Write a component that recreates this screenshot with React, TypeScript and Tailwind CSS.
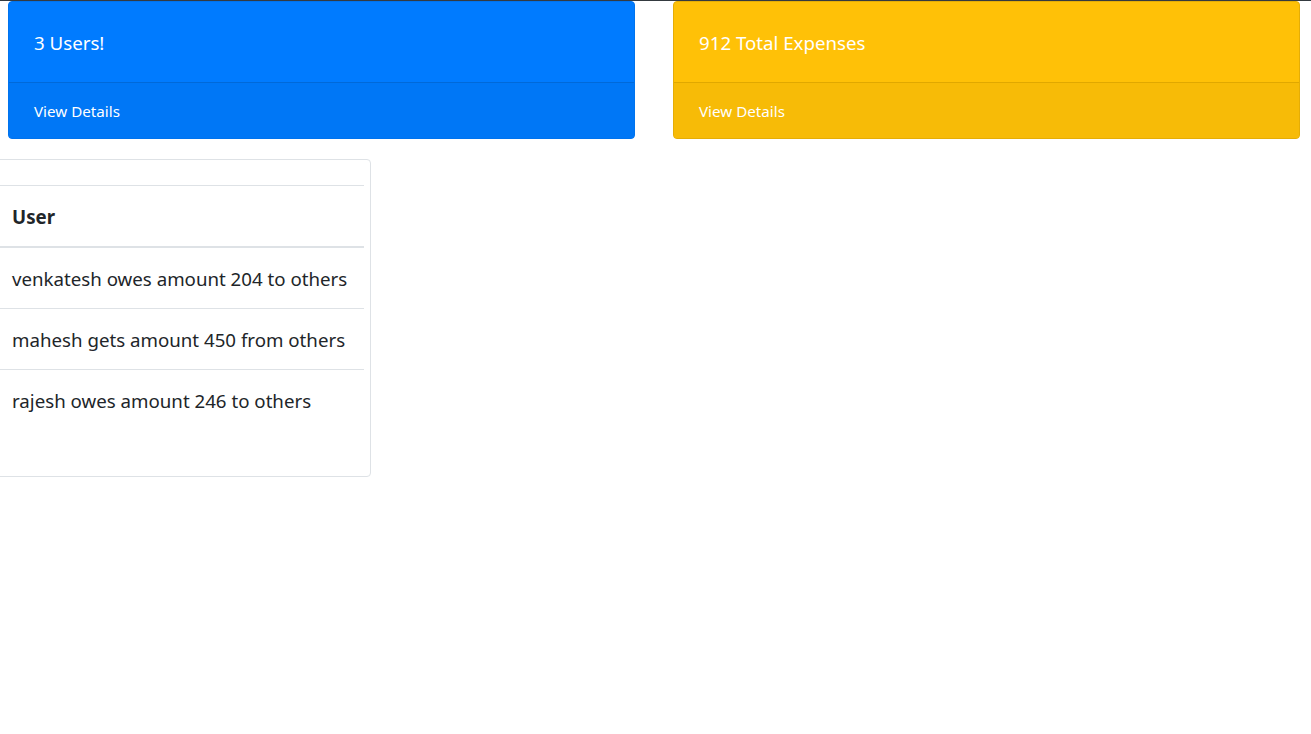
import React from "react";

export default function App() {
  const rows = [
    "venkatesh owes amount 204 to others",
    "mahesh gets amount 450 from others",
    "rajesh owes amount 246 to others",
  ];
  return (
    <div
      className="min-h-[734px] bg-white overflow-hidden"
      style={{ fontFamily: '"Noto Sans", "Open Sans", sans-serif' }}
    >
      <div className="h-px bg-[#343a40]" />
      <div className="flex gap-[38px] pl-[8px] pr-[11px]">
        <div className="flex-1 rounded-[4px] bg-[#007bff] border border-[#0073ee] text-white overflow-hidden">
          <div className="h-[80px] flex items-center pl-[25px] pt-[2px] text-[18.7px]">3 Users!</div>
          <div className="h-[56px] border-t border-[#0069d9] bg-[#0077f6] flex items-center pl-[25px] pt-[2px] text-[15.2px]">
            View Details
          </div>
        </div>
        <div className="flex-1 rounded-[4px] bg-[#ffc107] border border-[#e5ad06] text-white overflow-hidden">
          <div className="h-[80px] flex items-center pl-[25px] pt-[2px] text-[18.7px]">912 Total Expenses</div>
          <div className="h-[56px] border-t border-[#e0a800] bg-[#f7bb07] flex items-center pl-[25px] pt-[2px] text-[15.2px]">
            View Details
          </div>
        </div>
      </div>
      <div className="mt-[20px] -ml-[10px] w-[381px] h-[318px] rounded-[4px] border border-[#dee2e6] pt-[25px] pl-[5px] pr-[6px]">
        <div className="border-t border-[#dee2e6]">
          <div className="h-[62px] flex items-center pl-[16px] pt-[2px] text-[18.7px] font-bold text-[#212529] border-b-2 border-[#dee2e6]">
            User
          </div>
          {rows.map((r, i) => (
            <div
              key={i}
              className={`h-[61px] flex items-center pl-[16px] pt-[2px] text-[18.7px] text-[#212529] ${
                i < rows.length - 1 ? "border-b border-[#dee2e6]" : ""
              }`}
            >
              {r}
            </div>
          ))}
        </div>
      </div>
    </div>
  );
}
